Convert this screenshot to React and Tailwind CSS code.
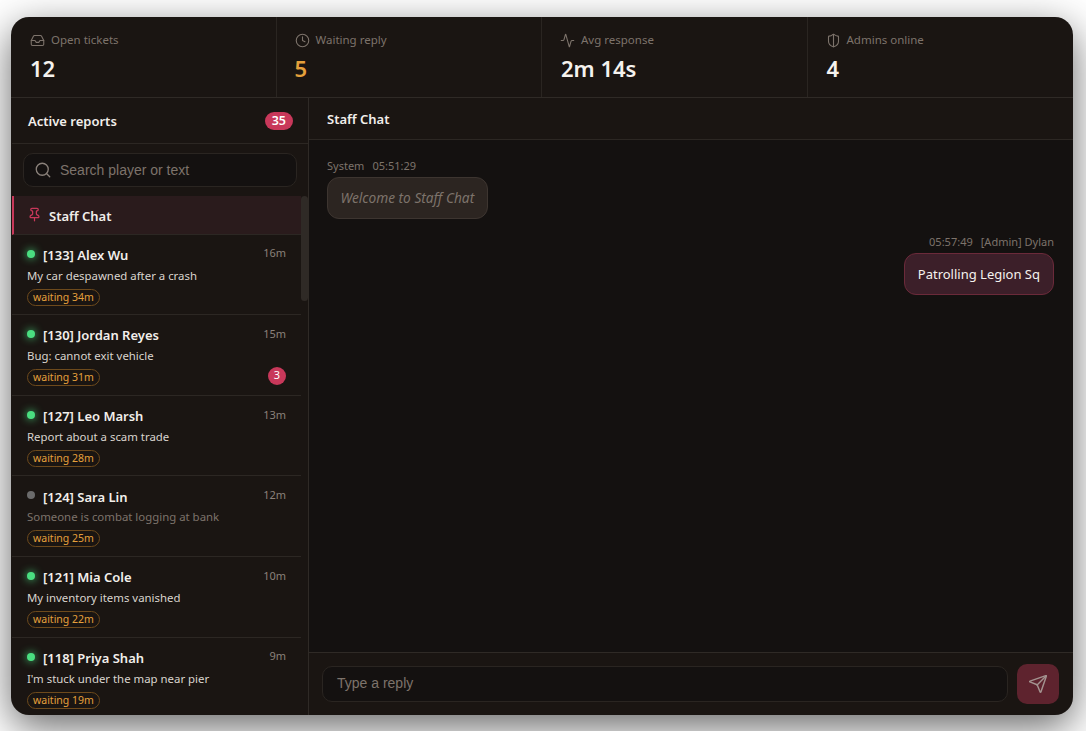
import React from 'react';
import { Inbox, Clock, Activity, ShieldHalf, Search, Pin, Send } from 'lucide-react';

const stats = [
  { label: 'Open tickets', value: '12', icon: Inbox, pad: 'pl-[19px]', nudge: '' },
  { label: 'Waiting reply', value: '5', icon: Clock, color: 'text-[#e5a03c]', pad: 'pl-[18px]', nudge: '' },
  { label: 'Avg response', value: '2m 14s', icon: Activity, pad: 'pl-[18px]', nudge: 'ml-px' },
  { label: 'Admins online', value: '4', icon: ShieldHalf, pad: 'pl-[18px]', nudge: 'ml-px' },
];

const reports = [
  { id: 133, name: 'Alex Wu', text: 'My car despawned after a crash', age: '16m', waiting: 34, online: true },
  { id: 130, name: 'Jordan Reyes', text: 'Bug: cannot exit vehicle', age: '15m', waiting: 31, online: true, unread: 3 },
  { id: 127, name: 'Leo Marsh', text: 'Report about a scam trade', age: '13m', waiting: 28, online: true },
  { id: 124, name: 'Sara Lin', text: 'Someone is combat logging at bank', age: '12m', waiting: 25, online: false },
  { id: 121, name: 'Mia Cole', text: 'My inventory items vanished', age: '10m', waiting: 22, online: true },
  { id: 118, name: 'Priya Shah', text: "I'm stuck under the map near pier", age: '9m', waiting: 19, online: true },
];

function ReportRow({ report }) {
  return (
    <div className="h-[80.6px] border-b border-[#2c2723] pl-[15px] pr-[15px] pt-[10px]">
      <div className="flex h-[22px] items-center justify-between">
        <div className="flex items-center">
          <span
            className={
              report.online
                ? 'mb-1 h-2 w-2 rounded-full bg-[#4ade80] shadow-[0_0_8px_#4ade80]'
                : 'mb-1 h-2 w-2 rounded-full bg-[#6b6b6b]'
            }
          />
          <span className="ml-2 text-[13px] font-semibold text-[#f2efeb]">
            [{report.id}] {report.name}
          </span>
        </div>
        <span className="mb-1 text-[11px] text-[#8a817a]">{report.age}</span>
      </div>
      <p className={report.online ? 'text-[11.4px] leading-[18px] text-[#d9d4ce]' : 'text-[11.4px] leading-[18px] text-[#7d736b]'}>
        {report.text}
      </p>
      <div className="mt-[4px] flex h-[17px] items-center justify-between">
        <span className="rounded-full border border-[#6e4a1c] px-[5px] text-[10.5px] leading-[15px] text-[#e5a03c]">
          waiting {report.waiting}m
        </span>
        {report.unread && (
          <span className="mb-1 flex h-[18px] w-[18px] items-center justify-center rounded-full bg-[#c8385a] text-[11px] text-white">
            {report.unread}
          </span>
        )}
      </div>
    </div>
  );
}

export default function App() {
  return (
    <div className="flex h-[731px] w-[1086px] items-start overflow-hidden bg-white pl-[11px] pt-[17px] font-['Noto_Sans',sans-serif]">
      <div className="flex h-[698px] w-[1062px] flex-col overflow-hidden rounded-[18px] bg-[#1a1512] shadow-[0_12px_40px_rgba(0,0,0,0.6)]">
        <div className="grid h-[81px] shrink-0 grid-cols-4 border-b border-[#2f2a26]">
          {stats.map((stat) => (
            <div key={stat.label} className={`border-r border-[#2a2521] pt-[14px] last:border-r-0 ${stat.pad}`}>
              <div className="flex items-center gap-[6px] text-[11.5px] leading-[18px] text-[#7d736b]">
                <stat.icon size={15} strokeWidth={1.75} />
                <span>{stat.label}</span>
              </div>
              <div className={`mt-1 text-[22px] font-semibold leading-[30px] ${stat.nudge} ${stat.color || 'text-[#f5f2ee]'}`}>
                {stat.value}
              </div>
            </div>
          ))}
        </div>

        <div className="flex min-h-0 flex-1">
          <div className="flex w-[298px] shrink-0 flex-col border-r border-[#2f2a26] pl-px">
            <div className="flex h-[46px] shrink-0 items-center justify-between border-b border-[#2c2723] pl-4 pr-[15px]">
              <span className="pt-[2px] text-[13px] font-semibold text-[#f2efeb]">Active reports</span>
              <span className="rounded-full bg-[#c8385a] px-[7px] text-[12.5px] font-semibold leading-[18px] text-white">35</span>
            </div>
            <div className="shrink-0 px-[11px] py-[9px]">
              <div className="flex h-[34px] items-center gap-2 rounded-[10px] border border-[#2a2521] bg-[#141110] pl-[10px]">
                <Search size={18} strokeWidth={1.75} className="text-[#8a817a]" />
                <span className="font-['Liberation_Sans',sans-serif] text-[14px] text-[#7d736b]">Search player or text</span>
              </div>
            </div>
            <div className="relative min-h-0 flex-1 overflow-hidden pr-[7px]">
              <div className="flex h-[38.6px] items-center gap-[7px] border-b border-[#2c2723] border-l-2 border-l-[#c8385a] bg-[#2a1b1c] pl-[13px]">
                <Pin size={15} strokeWidth={2} className="text-[#c8385a]" />
                <span className="pt-[3px] text-[13px] font-semibold text-[#f2efeb]">Staff Chat</span>
              </div>
              {reports.map((report) => (
                <ReportRow key={report.id} report={report} />
              ))}
              {/* scrollbar thumb */}
              <div className="absolute right-0 top-0 h-[105px] w-[7px] rounded-full bg-[#2f2a26]" />
            </div>
          </div>

          <div className="flex min-w-0 flex-1 flex-col">
            <div className="flex h-[42px] shrink-0 items-center border-b border-[#2c2723] pl-[18px]">
              <span className="pt-[2px] text-[13px] font-semibold text-[#f2efeb]">Staff Chat</span>
            </div>
            <div className="min-h-0 flex-1 bg-[#141110] pl-[18px] pr-[19px] pt-[18px]">
              <div className="flex items-center gap-2 text-[11px] leading-[16px] text-[#7d736b]">
                <span>System</span>
                <span>05:51:29</span>
              </div>
              <div className="mt-[3px] w-fit rounded-[12px] border border-[#3d3530] bg-[#2c2521] px-[12.5px] py-[10px] text-[13.7px] italic leading-[20px] text-[#7d736b]">
                Welcome to Staff Chat
              </div>
              <div className="mt-[15px] flex items-center justify-end gap-2 text-[11px] leading-[16px] text-[#7d736b]">
                <span>05:57:49</span>
                <span>[Admin] Dylan</span>
              </div>
              <div className="ml-auto mt-[3px] w-fit rounded-[12px] border border-[#6b2a3a] bg-[#3c1f29] px-[13px] py-[10px] text-[13px] leading-[20px] text-[#f5f2ee]">
                Patrolling Legion Sq
              </div>
            </div>
            <div className="flex h-[63px] shrink-0 items-center gap-[9px] border-t border-[#2f2a26] pl-[13px] pr-[14px]">
              <div className="flex h-[36px] flex-1 items-center rounded-[10px] border border-[#2a2521] bg-[#141110] pb-[2px] pl-[14px]">
                <span className="font-['Liberation_Sans',sans-serif] text-[14px] text-[#7d736b]">Type a reply</span>
              </div>
              <button className="flex h-[40px] w-[42px] items-center justify-center rounded-[10px] bg-[#5e232e] text-[#a3928f]">
                <Send size={20} strokeWidth={1.75} />
              </button>
            </div>
          </div>
        </div>
      </div>
    </div>
  );
}
